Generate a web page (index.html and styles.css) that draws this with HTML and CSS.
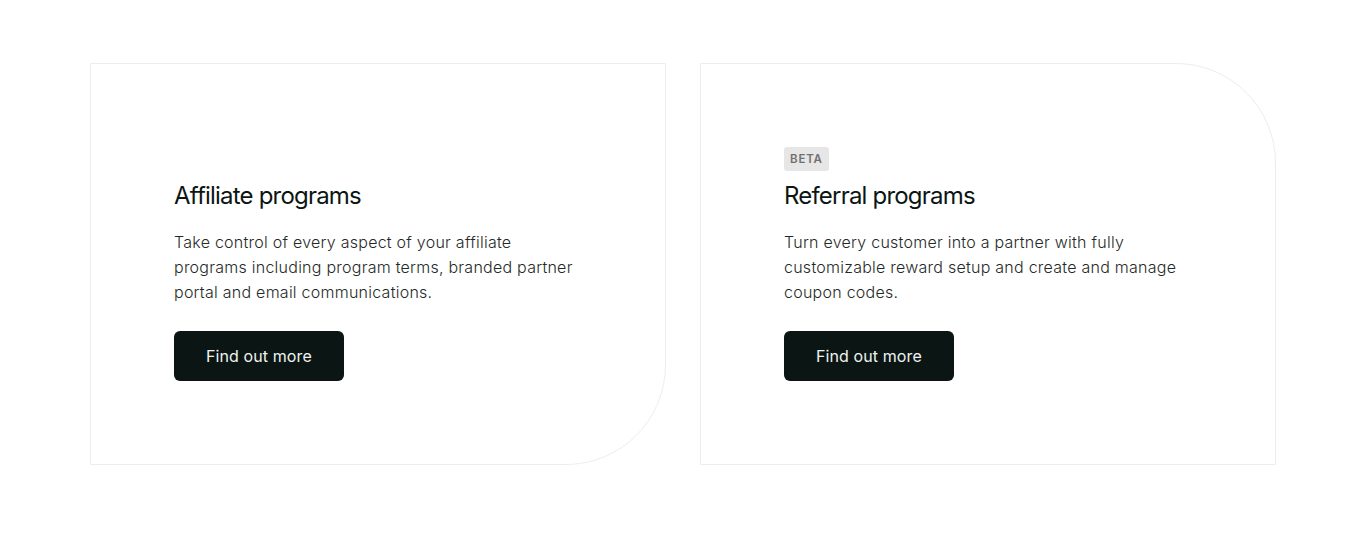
FILE: index.html
```html
<!DOCTYPE html>
<html lang="en">
<head>
  <meta charset="utf-8">
  <link rel="stylesheet" href="styles.css">
  <title>Programs</title>
</head>
<body>

  <div class="programs">
    <div class="card card-affiliate">
      <h2 class="card-title">Affiliate programs</h2>
      <p class="card-text">Take control of every aspect of your affiliate programs including program terms, branded partner portal and email communications.</p>
      <a class="card-button" href="#">Find out more</a>
    </div>

    <div class="card card-referral">
      <span class="badge">Beta</span>
      <h2 class="card-title">Referral programs</h2>
      <p class="card-text">Turn every customer into a partner with fully customizable reward setup and create and manage coupon codes.</p>
      <a class="card-button" href="#">Find out more</a>
    </div>
  </div>

</body>
</html>
```

FILE: styles.css
```css
body {
  margin: 0;
  background-color: #fff;
  font-family: 'Inter', 'Liberation Sans', sans-serif;
  color: #0b1614;
}

.programs {
  display: grid;
  grid-template-columns: 576px 576px;
  gap: 34px;
  justify-content: center;
  padding-top: 63px;
}

.card {
  box-sizing: border-box;
  height: 402px;
  padding: 84px 83px 83px;
  border: 1px solid #ededed;
  display: flex;
  flex-direction: column;
  justify-content: flex-end;
  align-items: flex-start;
}

.card-affiliate {
  border-bottom-right-radius: 100px;
}

.card-referral {
  border-top-right-radius: 100px;
}

.badge {
  display: inline-block;
  padding: 5px 6px;
  margin-bottom: 9px;
  background-color: #e6e6e6;
  border-radius: 3px;
  font-size: 11.5px;
  font-weight: 600;
  letter-spacing: 0.8px;
  line-height: 14px;
  text-transform: uppercase;
  color: #707070;
}

.card-title {
  margin: 0 0 19px;
  font-size: 24px;
  font-weight: 400;
  line-height: 31px;
  letter-spacing: -0.8px;
  color: #0b1614;
}

.card-text {
  max-width: 406px;
  margin: 0 0 26px;
  font-size: 16px;
  font-weight: 300;
  line-height: 25px;
  letter-spacing: 0.25px;
  color: #1f2a27;
}

.card-button {
  display: inline-block;
  box-sizing: border-box;
  height: 50px;
  padding: 0 32px;
  line-height: 50px;
  background-color: #0b1614;
  border-radius: 6px;
  font-size: 16px;
  letter-spacing: 0.1px;
  color: #eef3f1;
  text-decoration: none;
}
```
